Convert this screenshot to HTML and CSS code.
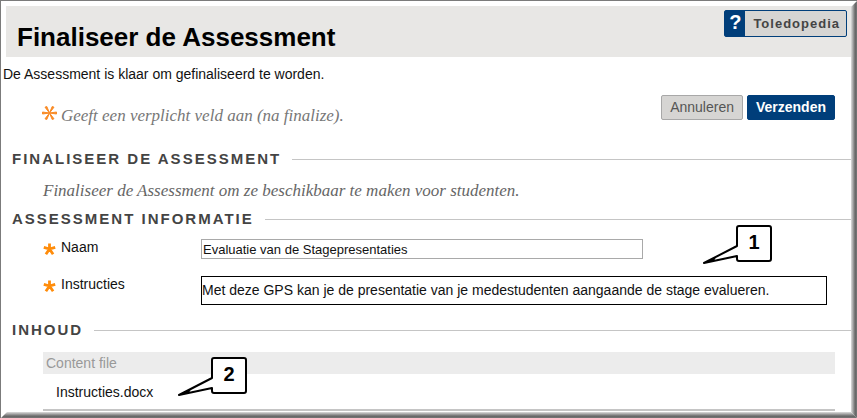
FILE: index.html
```html
<!DOCTYPE html>
<html lang="nl">
<head>
<meta charset="utf-8">
<title>Finaliseer de Assessment</title>
<link rel="stylesheet" href="styles.css">
</head>
<body>
<svg class="defs" aria-hidden="true">
  <symbol id="star" viewBox="0 0 12 12"><path d="M6 6V0.5M6 6L0.3 4.3M6 6L11.7 4.3M6 6L2.4 11.2M6 6L9.6 11.2" stroke="#ff8c0a" stroke-width="2.8" fill="none"/></symbol>
  <symbol id="bubble" viewBox="0 0 71 40"><path d="M37 2H67Q69 2 69 4V35Q69 37 67 37H37Q35 37 35 35V32L2 39L35 22V4Q35 2 37 2Z" fill="#fff" stroke="#000" stroke-width="2" stroke-linejoin="round"/><path d="M2 39L14 33L12 37Z"/></symbol>
</svg>
<main class="frame">
  <header class="header">
    <h1>Finaliseer de Assessment</h1>
    <a class="help" href="#"><span class="help-mark">?</span><span class="help-label">Toledopedia</span></a>
  </header>
  <p class="intro">De Assessment is klaar om gefinaliseerd te worden.</p>
  <form>
    <div class="toolbar">
      <p class="note"><svg class="legend-star" viewBox="0 0 15 14"><path d="M7.500 7L0.500 6V8ZM7.500 7L14.500 6V8ZM7.500 7L3 1.200L4.800 0.500ZM7.500 7L10.200 0.500L12 1.200ZM7.500 7L3 12.800L4.800 13.500ZM7.500 7L10.200 13.500L12 12.800Z" fill="#f98b26" stroke="#f98b26" stroke-width="1" stroke-linejoin="round"/></svg>Geeft een verplicht veld aan (na finalize).</p>
      <div class="actions">
        <button type="button" class="btn">Annuleren</button>
        <button type="submit" class="btn primary">Verzenden</button>
      </div>
    </div>
    <section>
      <h2>FINALISEER DE ASSESSMENT</h2>
      <p class="description">Finaliseer de Assessment om ze beschikbaar te maken voor studenten.</p>
    </section>
    <section>
      <h2>ASSESSMENT INFORMATIE</h2>
      <div class="fields">
        <label for="naam"><svg class="star"><use href="#star"/></svg>Naam</label>
        <div><input id="naam" type="text" value="Evaluatie van de Stagepresentaties"></div>
        <label for="instructies"><svg class="star"><use href="#star"/></svg>Instructies</label>
        <div><textarea id="instructies" rows="1">Met deze GPS kan je de presentatie van je medestudenten aangaande de stage evalueren.</textarea></div>
      </div>
    </section>
    <section>
      <h2>INHOUD</h2>
      <table>
        <thead><tr><th scope="col">Content file</th></tr></thead>
        <tbody><tr><td>Instructies.docx</td></tr></tbody>
      </table>
    </section>
  </form>
  <div class="callout one"><svg><use href="#bubble"/></svg><span>1</span></div>
  <div class="callout two"><svg><use href="#bubble"/></svg><span>2</span></div>
</main>
</body>
</html>
```
FILE: styles.css
```css
* { box-sizing: border-box; }
body {
  margin: 0;
  font: 14px/20px "Liberation Sans", Arial, sans-serif;
  color: #111;
  background: #fff;
}
h1, h2, p { margin: 0; }
.defs { position: absolute; width: 0; height: 0; }
.frame {
  position: relative;
  min-height: 100vh;
  padding: 5px 4px 6px 2px;
  border: 1px solid #7b7b7b;
  border-right-width: 0;
  border-bottom-width: 0;
}
.frame::before, .frame::after {
  content: "";
  position: absolute;
  right: 0;
  bottom: 0;
}
.frame::before {
  top: 0;
  width: 6px;
  background: linear-gradient(to right, #ddd, #aaa 30%, #666 70%, #777);
  clip-path: polygon(0 6px, 100% 0, 100% 100%, 0 calc(100% - 6px));
}
.frame::after {
  left: 0;
  height: 6px;
  background: linear-gradient(#ddd, #aaa 30%, #666 70%, #777);
  clip-path: polygon(6px 0, calc(100% - 6px) 0, 100% 100%, 0 100%);
}
.header {
  display: flex;
  justify-content: space-between;
  align-items: flex-start;
  height: 51px;
  margin-left: 3px;
  padding: 4px 6px 0 11px;
  background: #e8e7e5;
}
h1 {
  padding-top: 12px;
  font-size: 26px;
  line-height: 30px;
  color: #000;
}
.help {
  display: flex;
  height: 27px;
  border: 1px solid #003e7a;
  border-radius: 2px;
  background: #d6d5d3;
  color: #444;
  font-weight: bold;
  line-height: 25px;
  text-decoration: none;
}
.help-mark {
  width: 20px;
  background: #003e7a;
  color: #fff;
  font-size: 20px;
  line-height: 22px;
  text-align: center;
}
.help-label {
  padding: 0 6px 0 8px;
  font-size: 13px;
  letter-spacing: 1px;
}
.intro { margin-top: 7px; }
.toolbar {
  display: flex;
  justify-content: space-between;
  margin: 11px 18px 0 39px;
}
.note, .description {
  font-family: Georgia, "Liberation Serif", serif;
  font-size: 17px;
  font-style: italic;
  color: #777;
}
.note {
  display: flex;
  gap: 4px;
  padding-top: 11px;
}
.legend-star { width: 15px; height: 14px; }
.actions { display: flex; gap: 4px; }
.btn {
  height: 25px;
  padding: 0 8px;
  border: 1px solid #a8a8a8;
  border-radius: 2px;
  background: #d6d5d3;
  color: #555;
  font: 14px/23px "Liberation Sans", Arial, sans-serif;
}
.primary {
  border-color: #003e7a;
  background: #003e7a;
  color: #fff;
  font-weight: bold;
}
h2 {
  display: flex;
  align-items: center;
  gap: 11px;
  margin-left: 9px;
  font-size: 15px;
  line-height: 20px;
  letter-spacing: 2px;
  color: #444;
}
h2::after {
  content: "";
  flex: 1;
  height: 1px;
  background: #c5c5c5;
}
section:first-of-type { margin-top: 23px; }
.description {
  margin: 12px 0 8px 40px;
  color: #666;
}
.fields {
  display: grid;
  grid-template-columns: 158px 1fr;
  row-gap: 17px;
  margin: 10px 26px 15px 40px;
}
.fields label {
  display: flex;
  gap: 5px;
  line-height: 17px;
}
.fields div { display: flex; }
.star { width: 13px; height: 12px; margin-top: 4px; }
input, textarea {
  display: block;
  margin: 0;
  border-radius: 0;
  background: #fff;
  color: #111;
  font-family: "Liberation Sans", Arial, sans-serif;
}
input {
  width: 442px;
  max-width: 100%;
  height: 20px;
  padding: 0 1px;
  border: 1px solid #a9a9a9;
  font-size: 13px;
}
textarea {
  width: 100%;
  height: 29px;
  padding: 4px 0;
  border: 1px solid #000;
  font-size: 14px;
  line-height: 19px;
  resize: none;
  overflow: hidden;
}
table {
  width: calc(100% - 58px);
  margin: 12px 18px 0 40px;
  border-collapse: collapse;
}
th {
  height: 22px;
  padding: 0 3px;
  background: #ececec;
  color: #999;
  font-weight: normal;
  text-align: left;
}
td {
  height: 36px;
  padding: 0 13px;
  border-bottom: 2px solid #c5c5c5;
}
.callout {
  position: absolute;
  width: 71px;
  height: 40px;
}
.callout svg { display: block; width: 71px; height: 40px; }
.callout span {
  position: absolute;
  left: 35px;
  top: 8px;
  width: 34px;
  color: #000;
  font-size: 20px;
  font-weight: bold;
  text-align: center;
}
.one { left: 701px; top: 223px; }
.two { left: 176px; top: 355px; }
```
